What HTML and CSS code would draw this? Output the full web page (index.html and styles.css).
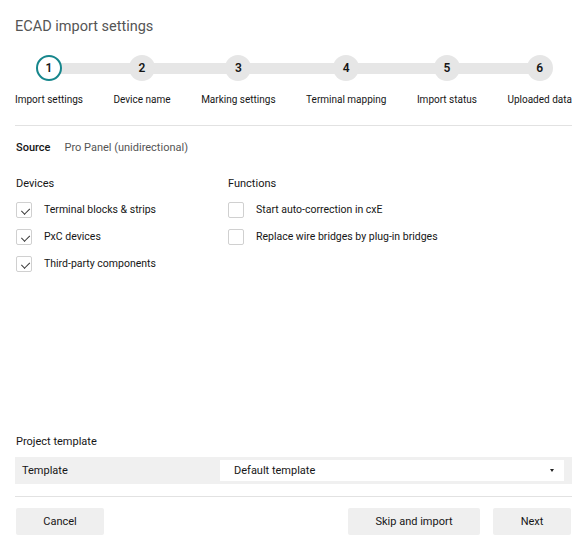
FILE: index.html
```html
<!DOCTYPE html>
<html lang="en">
<head>
    <meta charset="UTF-8">
    <meta name="viewport" content="width=device-width, initial-scale=1.0">
    <title>ECAD import settings</title>
    <link rel="stylesheet" href="styles.css">
</head>
<body>
    <div class="dialog">
        <h1 class="title">ECAD import settings</h1>

        <div class="stepper">
            <div class="step active">
                <div class="circle">1</div>
                <span>Import settings</span>
            </div>
            <div class="step">
                <div class="circle">2</div>
                <span>Device name</span>
            </div>
            <div class="step">
                <div class="circle">3</div>
                <span>Marking settings</span>
            </div>
            <div class="step">
                <div class="circle">4</div>
                <span>Terminal mapping</span>
            </div>
            <div class="step">
                <div class="circle">5</div>
                <span>Import status</span>
            </div>
            <div class="step">
                <div class="circle">6</div>
                <span>Uploaded data</span>
            </div>
        </div>

        <div class="content">
            <div class="source">
                <strong>Source</strong>
                <span>Pro Panel (unidirectional)</span>
            </div>

            <div class="options">
                <div class="group devices">
                    <h3>Devices</h3>
                    <label class="check"><span class="box checked"></span>Terminal blocks &amp; strips</label>
                    <label class="check"><span class="box checked"></span>PxC devices</label>
                    <label class="check"><span class="box checked"></span>Third-party components</label>
                </div>
                <div class="group">
                    <h3>Functions</h3>
                    <label class="check"><span class="box"></span>Start auto-correction in cxE</label>
                    <label class="check"><span class="box"></span>Replace wire bridges by plug-in bridges</label>
                </div>
            </div>
        </div>

        <div class="template">
            <h3>Project template</h3>
            <div class="template-row">
                <span class="template-label">Template</span>
                <div class="select">
                    <span>Default template</span>
                    <span class="caret"></span>
                </div>
            </div>
        </div>

        <div class="footer">
            <button class="cancel">Cancel</button>
            <div class="right">
                <button class="skip">Skip and import</button>
                <button class="next">Next</button>
            </div>
        </div>
    </div>
</body>
</html>
```

FILE: styles.css
```css
* {
    margin: 0;
    padding: 0;
    box-sizing: border-box;
}

body {
    font-family: Roboto, "Noto Sans", sans-serif;
    color: #161616;
    background: #fff;
}

.dialog {
    height: 551px;
    padding: 0 15px 16px;
    display: flex;
    flex-direction: column;
}

.title {
    font-size: 14.5px;
    font-weight: 400;
    color: #555;
    margin-top: 17px;
    line-height: 20px;
}

/* stepper */
.stepper {
    position: relative;
    display: flex;
    justify-content: space-between;
    margin-top: 18px;
}

.stepper::before {
    content: "";
    position: absolute;
    left: 30px;
    right: 30px;
    top: 8px;
    height: 11px;
    background: #e6e6e6;
}

.step {
    position: relative;
    display: flex;
    flex-direction: column;
    align-items: center;
    font-size: 10px;
    line-height: 13px;
}

.circle {
    width: 26px;
    height: 26px;
    border-radius: 50%;
    background: #e6e6e6;
    display: flex;
    align-items: center;
    justify-content: center;
    font-size: 12px;
    font-weight: 600;
    margin-bottom: 12px;
}

.step.active .circle {
    background: #fff;
    border: 2px solid #16868c;
}

.content {
    flex: 1;
    border-top: 1px solid #e2e2e2;
    margin-top: 19px;
}

.source {
    font-size: 11px;
    line-height: 14px;
    margin-top: 15px;
    display: flex;
    gap: 14px;
}

.source strong {
    font-weight: 500;
    margin-left: 1px;
}

.source span {
    color: #555;
}

.options {
    display: flex;
    margin-top: 22px;
}

.group h3, .template h3 {
    font-size: 11px;
    line-height: 14px;
    font-weight: 400;
    margin-left: 1px;
}

.group h3 {
    margin-bottom: 5px;
}

.devices {
    width: 212px;
}

.check {
    display: flex;
    align-items: center;
    font-size: 10.5px;
    height: 27px;
    padding-left: 1px;
}

.box {
    width: 16px;
    height: 16px;
    border: 1px solid #d0d0d0;
    border-radius: 2px;
    margin-right: 12px;
    position: relative;
}

.box.checked::after {
    content: "";
    position: absolute;
    left: 3px;
    top: 2px;
    width: 7px;
    height: 3.5px;
    border-left: 1.2px solid #333;
    border-bottom: 1.2px solid #333;
    transform: rotate(-45deg) translate(-1px, 3px);
}

/* template */
.template h3 {
    margin-bottom: 8px;
}

.template-row {
    display: flex;
    align-items: center;
    background: #f0f0f0;
    height: 27px;
    padding: 3px 8px 3px 7px;
    font-size: 11px;
}

.template-label {
    width: 198px;
}

.select {
    flex: 1;
    height: 21px;
    background: #fff;
    display: flex;
    align-items: center;
    justify-content: space-between;
    padding: 0 10px 0 14px;
}

.caret {
    width: 0;
    height: 0;
    border-left: 2.5px solid transparent;
    border-right: 2.5px solid transparent;
    border-top: 3px solid #222;
}

.footer {
    display: flex;
    justify-content: space-between;
    border-top: 1px solid #e2e2e2;
    margin-top: 12px;
    padding-top: 11px;
}

.right {
    display: flex;
    gap: 13px;
}

button {
    font-family: inherit;
    font-size: 11px;
    color: #161616;
    background: #efefef;
    border: none;
    border-radius: 2px;
    height: 27px;
    cursor: pointer;
}

.cancel {
    width: 88px;
    margin-left: 1px;
}

.skip {
    width: 132px;
}

.next {
    width: 78px;
    margin-right: 1px;
}
```
